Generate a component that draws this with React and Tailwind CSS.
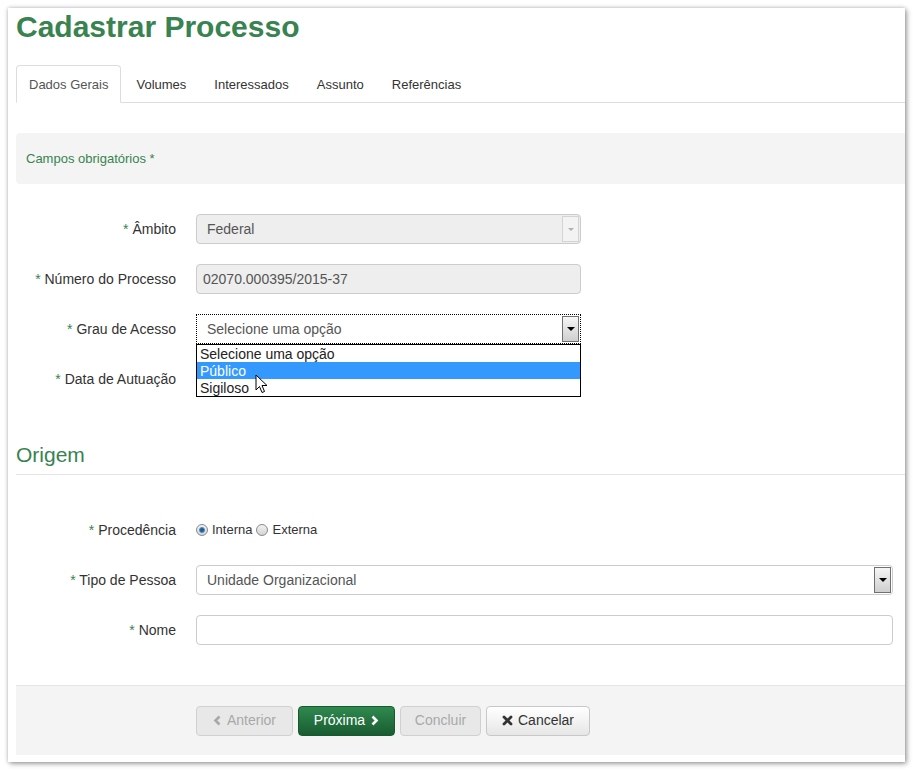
import React from 'react';

const GREEN = 'text-[#38834f]';

const Chevron = ({ dir }) => (
  <svg width="9" height="11" viewBox="0 0 9 11">
    <polyline
      points={dir === 'left' ? '6.5,1.5 2.5,5.5 6.5,9.5' : '2.5,1.5 6.5,5.5 2.5,9.5'}
      fill="none"
      stroke="currentColor"
      strokeWidth="2.6"
    />
  </svg>
);

const Cross = () => (
  <svg width="11" height="11" viewBox="0 0 11 11">
    <path d="M2 2 L9 9 M9 2 L2 9" stroke="currentColor" strokeWidth="2.8" strokeLinecap="round" />
  </svg>
);

const Arrow = ({ dark }) => (
  <div
    className={`self-stretch w-[17px] my-[1px] mr-[1px] flex items-center justify-center border ${
      dark ? 'border-[#707070] bg-gradient-to-b from-[#f6f6f6] to-[#cfcfcf]' : 'border-[#d4d4d4] bg-[#f3f3f3]'
    }`}
  >
    {dark ? (
      <div className="w-0 h-0 border-l-[4px] border-r-[4px] border-t-[4px] border-l-transparent border-r-transparent border-t-black" />
    ) : (
      <div className="w-0 h-0 border-l-[3px] border-r-[3px] border-t-[3px] border-l-transparent border-r-transparent border-t-[#b0b0b0]" />
    )}
  </div>
);

const Label = ({ children }) => (
  <div className="w-[160px] shrink-0 text-right text-[14px] text-[#333]">
    <span className={GREEN}>*</span> {children}
  </div>
);

const Row = ({ label, children, className = '' }) => (
  <div className={`flex items-center h-[30px] ${className}`}>
    <Label>{label}</Label>
    <div className="ml-[20px] relative">{children}</div>
  </div>
);

const Radio = ({ checked }) => (
  <div className="w-[12px] h-[12px] rounded-full border border-[#8a8a8a] bg-gradient-to-b from-[#f2f2f2] to-[#d4d4d4] flex items-center justify-center">
    {checked && <div className="w-[6px] h-[6px] rounded-full bg-[#1b5d96] border border-[#4d8cc4]" />}
  </div>
);

const App = () => {
  return (
    <div className="h-[770px] bg-white p-[8px]" style={{ fontFamily: '"Liberation Sans", Arial, sans-serif' }}>
      <div className="h-[754px] bg-white pl-[8px] pb-[7px] flex flex-col shadow-[0_0_4px_rgba(0,0,0,0.25),2px_2px_5px_rgba(0,0,0,0.3)]">
        {/* Title */}
        <h1 className={`mt-[2px] text-[30px] leading-[33px] font-bold ${GREEN}`}>Cadastrar Processo</h1>

        {/* Tabs */}
        <ul className="mt-[22px] flex border-b border-[#ddd] text-[13px]">
          <li className="-mb-px h-[38px] pt-[2px] px-[12px] flex items-center bg-white border border-[#ddd] border-b-white rounded-t-[4px] text-[#555]">
            Dados Gerais
          </li>
          {['Volumes', 'Interessados', 'Assunto', 'Referências'].map((t) => (
            <li key={t} className="ml-[2px] h-[37px] pt-[2px] px-[13px] flex items-center text-[#333]">
              {t}
            </li>
          ))}
        </ul>

        {/* Required fields notice */}
        <div className={`mt-[30px] h-[51px] bg-[#f4f4f4] rounded-l-[4px] flex items-center pl-[10px] text-[13px] ${GREEN}`}>
          Campos obrigatórios *
        </div>

        {/* General form */}
        <div className="mt-[30px] flex flex-col gap-[20px]">
          <Row label="Âmbito">
            <div className="w-[385px] h-[30px] flex items-center rounded-[4px] border border-[#ccc] bg-[#eee] text-[14px] text-[#555]">
              <span className="flex-1 pl-[10px]">Federal</span>
              <Arrow />
            </div>
          </Row>
          <Row label="Número do Processo">
            <div className="w-[385px] h-[30px] flex items-center rounded-[4px] border border-[#ccc] bg-[#eee] text-[14px] text-[#555] pl-[6px]">
              02070.000395/2015-37
            </div>
          </Row>
          <Row label="Grau de Acesso" className="relative z-10">
            <div className="w-[385px] h-[30px] flex items-center border border-dotted border-black bg-white text-[14px] text-[#555]">
              <span className="flex-1 pl-[10px]">Selecione uma opção</span>
              <Arrow dark />
            </div>
            {/* open dropdown list */}
            <div className="absolute left-0 top-full w-[385px] bg-white border border-black text-[14px] text-[#222] leading-[17px]">
              <div className="pl-[3px] pt-[1px] h-[17px]">Selecione uma opção</div>
              <div className="pl-[3px] pt-[1px] h-[17px] bg-[#3399ff] text-white">Público</div>
              <div className="pl-[3px] pt-[1px] h-[17px] relative">
                Sigiloso
                <svg className="absolute left-[58px] top-[-5px]" width="13" height="20" viewBox="0 0 13 20">
                  <path d="M1 1 L1 16 L4.5 12.5 L7 18.5 L9.5 17.5 L7 11.5 L12 11.5 Z" fill="white" stroke="black" strokeWidth="1" strokeLinejoin="round" />
                </svg>
              </div>
            </div>
          </Row>
          <Row label="Data de Autuação">
            <div className="w-[385px] h-[30px] rounded-[4px] border border-[#ccc] bg-white" />
          </Row>
        </div>

        {/* Origem */}
        <h2 className={`mt-[49px] text-[21px] leading-[24px] pb-[7px] border-b border-[#e5e5e5] ${GREEN}`}>Origem</h2>

        <div className="mt-[40px] flex flex-col gap-[20px]">
          <Row label="Procedência">
            <div className="flex items-center text-[13px] text-[#333]">
              <Radio checked />
              <span className="ml-[4px]">Interna</span>
              <span className="ml-[4px]"><Radio /></span>
              <span className="ml-[4px]">Externa</span>
            </div>
          </Row>
          <Row label="Tipo de Pessoa">
            <div className="w-[697px] h-[30px] flex items-center rounded-[4px] border border-[#ccc] bg-white text-[14px] text-[#555]">
              <span className="flex-1 pl-[10px]">Unidade Organizacional</span>
              <Arrow dark />
            </div>
          </Row>
          <Row label="Nome">
            <div className="w-[697px] h-[30px] rounded-[4px] border border-[#ccc] bg-white" />
          </Row>
        </div>

        {/* Footer */}
        <div className="mt-[40px] h-[70px] border-t border-[#e5e5e5] bg-[#f4f4f4] flex items-center pl-[180px] gap-[5px] text-[14px]">
          <button className="w-[97px] h-[30px] rounded-[4px] border border-[#d0d0d0] bg-[#e8e8e8] text-[#a8a8a8] flex items-center justify-center gap-[5px]">
            <Chevron dir="left" /> Anterior
          </button>
          <button className="w-[97px] h-[30px] rounded-[4px] border border-[#175a2e] bg-gradient-to-b from-[#2f8a4f] to-[#195c31] text-white flex items-center justify-center gap-[5px]">
            Próxima <Chevron dir="right" />
          </button>
          <button className="w-[81px] h-[30px] rounded-[4px] border border-[#d0d0d0] bg-[#e8e8e8] text-[#a8a8a8] flex items-center justify-center">
            Concluir
          </button>
          <button className="w-[104px] h-[30px] rounded-[4px] border border-[#c8c8c8] bg-gradient-to-b from-white to-[#e6e6e6] text-[#333] flex items-center justify-center gap-[5px]">
            <Cross /> Cancelar
          </button>
        </div>
      </div>
    </div>
  );
};

export default App;
